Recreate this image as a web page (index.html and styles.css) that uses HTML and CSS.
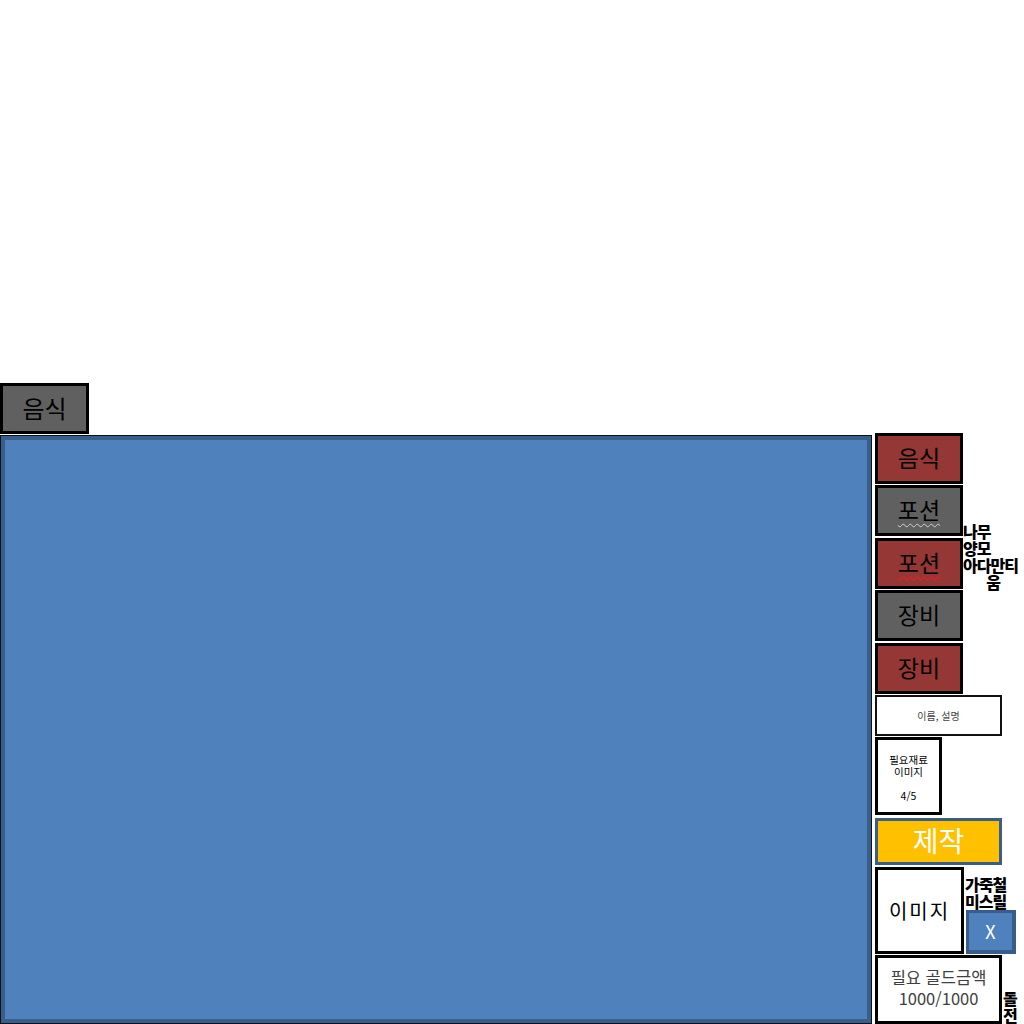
FILE: index.html
```html
<!DOCTYPE html>
<html lang="ko">

<head>
    <meta charset="UTF-8">
    <title>제작 화면</title>
    <link rel="stylesheet" href="styles.css">
</head>

<body>
    <div class="page">
        <!-- 상단 탭 -->
        <div class="tab">음식</div>

        <div class="main">
            <!-- 아이템 목록 영역 -->
            <div class="board"></div>

            <!-- 오른쪽 제작 패널 -->
            <div class="side">
                <div class="cat red first">음식</div>
                <div class="cat gray"><span class="spell">포션</span></div>
                <div class="cat red"><span class="spell">포션</span></div>
                <div class="cat gray">장비</div>
                <div class="cat red">장비</div>

                <div class="note note-wood">나무<br>양모<br>아다만티<br><span class="mid">움</span></div>

                <div class="info">이름, 설명</div>

                <div class="mat">필요재료<br>이미지<br><br>4/5</div>

                <div class="craft">제작</div>

                <div class="img-row">
                    <div class="pic">이미지</div>
                    <div class="pic-side">
                        <div class="note">가죽철<br>미스릴</div>
                        <div class="close">X</div>
                    </div>
                </div>

                <div class="gold-row">
                    <div class="gold">필요 골드금액<br>1000/1000</div>
                    <div class="note note-stone">돌<br>전</div>
                </div>
            </div>
        </div>
    </div>
</body>

</html>
```

FILE: styles.css
```css
* {
    margin: 0;
    padding: 0;
    box-sizing: border-box;
}

html {
    overflow: hidden;
}

body {
    width: 1024px;
    height: 1024px;
    background: #fff;
    font-family: "Noto Sans CJK KR", "Noto Sans", sans-serif;
    color: #000;
}

.page {
    padding-top: 383px;
}

.tab {
    width: 89px;
    height: 51px;
    border: 3px solid #000;
    background: #606060;
    font-size: 24px;
    line-height: 43px;
    text-align: center;
}

.main {
    display: flex;
    align-items: flex-start;
    margin-top: -1px;
}

.board {
    width: 872px;
    height: 589px;
    margin-top: 2px;
    background: #4f81bd;
    border: 1px solid #111;
    box-shadow: inset 0 0 0 4px #395e8c;
}

.side {
    position: relative;
    width: 149px;
    margin-left: 3px;
    display: flex;
    flex-direction: column;
    align-items: flex-start;
}

.cat {
    width: 88px;
    height: 51px;
    margin-top: 2px;
    border: 3px solid #000;
    font-size: 23px;
    line-height: 42px;
    text-align: center;
}

.cat.first {
    margin-top: 0;
}

.cat + .cat.gray {
    margin-top: 1px;
}

.cat + .cat.red,
.cat.gray + .cat.gray {
    margin-top: 2px;
}

.red {
    background: #953735;
}

.gray {
    background: #606060;
}

.gray .spell {
    text-decoration: underline wavy #d0d0d0 1px;
    text-underline-offset: 4px;
}

.red .spell {
    text-decoration: underline wavy #ff1a1a 1px;
    text-underline-offset: 4px;
}

.note {
    font-size: 16px;
    font-weight: 900;
    line-height: 17px;
    letter-spacing: -1px;
    text-align: left;
    white-space: nowrap;
}

.note .mid {
    display: block;
    text-align: center;
}

.note-wood {
    position: absolute;
    left: 88px;
    top: 90px;
    width: 60px;
}

.info {
    width: 127px;
    height: 41px;
    margin-top: 1px;
    border: 2px solid #111;
    background: #fff;
    font-size: 10px;
    line-height: 37px;
    color: #444;
    text-align: center;
}

.mat {
    width: 67px;
    height: 78px;
    margin-top: 1px;
    padding-top: 14px;
    border: 3px solid #000;
    background: #fff;
    font-size: 10.5px;
    line-height: 12px;
    text-align: center;
}

.craft {
    width: 127px;
    height: 47px;
    margin-top: 3px;
    border: 3px solid #385d8a;
    background: #ffc000;
    color: #fff;
    font-size: 28px;
    line-height: 39px;
    text-align: center;
}

.img-row {
    display: flex;
    margin-top: 2px;
}

.pic {
    width: 89px;
    height: 87px;
    border: 3px solid #000;
    background: #fff;
    font-size: 20px;
    line-height: 81px;
    letter-spacing: 2px;
    text-align: center;
}

.pic-side {
    display: flex;
    flex-direction: column;
    justify-content: flex-end;
    margin-left: 1px;
}

.pic-side .note {
    width: 50px;
}

.close {
    width: 50px;
    height: 44px;
    margin-left: 1px;
    border: 3px solid #385d8a;
    border-right-width: 4px;
    border-bottom-width: 4px;
    background: #4f81bd;
    color: #fff;
    font-size: 18px;
    line-height: 37px;
    text-align: center;
}

.gold-row {
    display: flex;
    align-items: flex-end;
    margin-top: 1px;
}

.gold {
    width: 127px;
    height: 69px;
    padding-top: 9px;
    border: 3px solid #000;
    background: #fff;
    color: #404040;
    font-size: 16.5px;
    line-height: 21px;
    text-align: center;
}

.note-stone {
    width: 18px;
    margin-left: 1px;
}
```
